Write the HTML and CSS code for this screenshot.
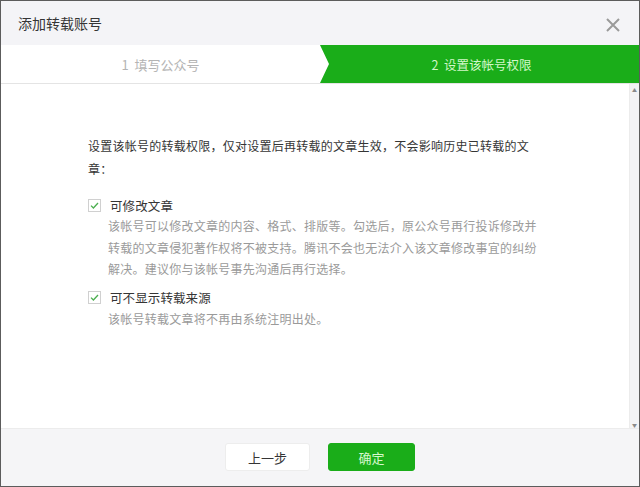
FILE: index.html
```html
<!DOCTYPE html>
<html lang="zh">
<head>
<meta charset="utf-8">
<link rel="stylesheet" href="styles.css">
</head>
<body>
<div class="dialog">
  <div class="header">
    <span class="title">添加转载账号</span>
    <svg class="close" width="14" height="14" viewBox="0 0 14 14"><path d="M1 1L13 13M13 1L1 13" stroke="#9a9a9a" stroke-width="2" fill="none"/></svg>
  </div>
  <div class="steps">
    <div class="step step-done">1&nbsp;&nbsp;填写公众号</div>
    <div class="step step-active">2&nbsp;&nbsp;设置该帐号权限</div>
  </div>
  <div class="body">
    <div class="content">
      <p class="intro">设置该帐号的转载权限，仅对设置后再转载的文章生效，不会影响历史已转载的文章：</p>
      <div class="option">
        <div class="option-head">
          <span class="checkbox"><svg width="11" height="11" viewBox="0 0 11 11"><path d="M2 5.6L4.4 8L9 3" stroke="#4caf50" stroke-width="1.3" fill="none"/></svg></span>
          <span class="label">可修改文章</span>
        </div>
        <p class="desc">该帐号可以修改文章的内容、格式、排版等。勾选后，原公众号再行投诉修改并转载的文章侵犯著作权将不被支持。腾讯不会也无法介入该文章修改事宜的纠纷解决。建议你与该帐号事先沟通后再行选择。</p>
      </div>
      <div class="option">
        <div class="option-head">
          <span class="checkbox"><svg width="11" height="11" viewBox="0 0 11 11"><path d="M2 5.6L4.4 8L9 3" stroke="#4caf50" stroke-width="1.3" fill="none"/></svg></span>
          <span class="label">可不显示转载来源</span>
        </div>
        <p class="desc">该帐号转载文章将不再由系统注明出处。</p>
      </div>
    </div>
    <div class="scrollbar">
      <span class="arrow">▲</span>
      <span class="arrow">▼</span>
    </div>
  </div>
  <div class="footer">
    <button class="btn btn-default">上一步</button>
    <button class="btn btn-primary">确定</button>
  </div>
</div>
</body>
</html>
```

FILE: styles.css
```css
html, body {
  margin: 0;
  padding: 0;
  background: #fff;
}
body {
  font-family: "Noto Sans CJK SC", "Liberation Sans", sans-serif;
}
.dialog {
  width: 640px;
  height: 487px;
  box-sizing: border-box;
  border: 1px solid #5c5c5c;
  display: flex;
  flex-direction: column;
  background: #fff;
}
.header {
  height: 44px;
  flex: none;
  background: #f4f4f7;
  display: flex;
  align-items: center;
  justify-content: space-between;
  padding: 0 19px 0 17px;
}
.title {
  font-size: 14px;
  color: #353535;
}
.close {
  margin-top: 4px;
}
.steps {
  height: 38px;
  flex: none;
  display: grid;
  grid-template-columns: 319px 1fr;
  border-bottom: 1px solid #e4e4e4;
  background: #fff;
}
.step {
  display: flex;
  align-items: center;
  justify-content: center;
  font-size: 13px;
}
.step-done {
  color: #b4b4b4;
}
.step-active {
  background: #1aad19;
  color: #d2f7c8;
  clip-path: polygon(0 0, 100% 0, 100% 100%, 0 100%, 9px 50%);
  padding-left: 4px;
  font-size: 12.5px;
}
.body {
  flex: 1;
  display: flex;
  background: #fff;
  min-height: 0;
}
.content {
  flex: 1;
  padding: 50px 0 0 87px;
}
.intro {
  margin: 0;
  width: 447px;
  font-size: 12px;
  letter-spacing: 0.25px;
  line-height: 23px;
  color: #353535;
}
.option {
  margin-top: 15px;
}
.option + .option {
  margin-top: 8px;
}
.option-head {
  display: flex;
  align-items: center;
  height: 20px;
}
.checkbox {
  width: 11px;
  height: 11px;
  border: 1px solid #d0d0d0;
  background: #fff;
  display: flex;
  align-items: center;
  justify-content: center;
  margin-right: 9px;
}
.label {
  font-size: 12.5px;
  letter-spacing: 0.1px;
  color: #353535;
}
.desc {
  margin: 0 0 0 20px;
  width: 432px;
  font-size: 12px;
  letter-spacing: 0.25px;
  line-height: 21.5px;
  color: #9a9a9a;
}
.scrollbar {
  width: 9px;
  flex: none;
  background: #f3f3f5;
  border-left: 1px solid #ececec;
  display: flex;
  flex-direction: column;
  justify-content: space-between;
  align-items: center;
  padding: 3px 0 0;
}
.arrow {
  font-size: 5px;
  color: #8a8a8a;
  line-height: 6px;
}
.footer {
  height: 58px;
  flex: none;
  background: #f5f5f7;
  display: flex;
  justify-content: center;
  align-items: flex-start;
  gap: 18px;
  padding-top: 14px;
  box-sizing: border-box;
  border-top: 1px solid #ececec;
}
.btn {
  font-family: "Noto Sans CJK SC", "Liberation Sans", sans-serif;
  font-size: 13px;
  height: 28px;
  border-radius: 3px;
  padding: 0;
  cursor: pointer;
}
.btn-default {
  width: 85px;
  background: #fff;
  border: 1px solid #ededed;
  color: #353535;
}
.btn-primary {
  width: 87px;
  background: #1aad19;
  border: 1px solid #1aad19;
  color: #d6f8cc;
}
```
